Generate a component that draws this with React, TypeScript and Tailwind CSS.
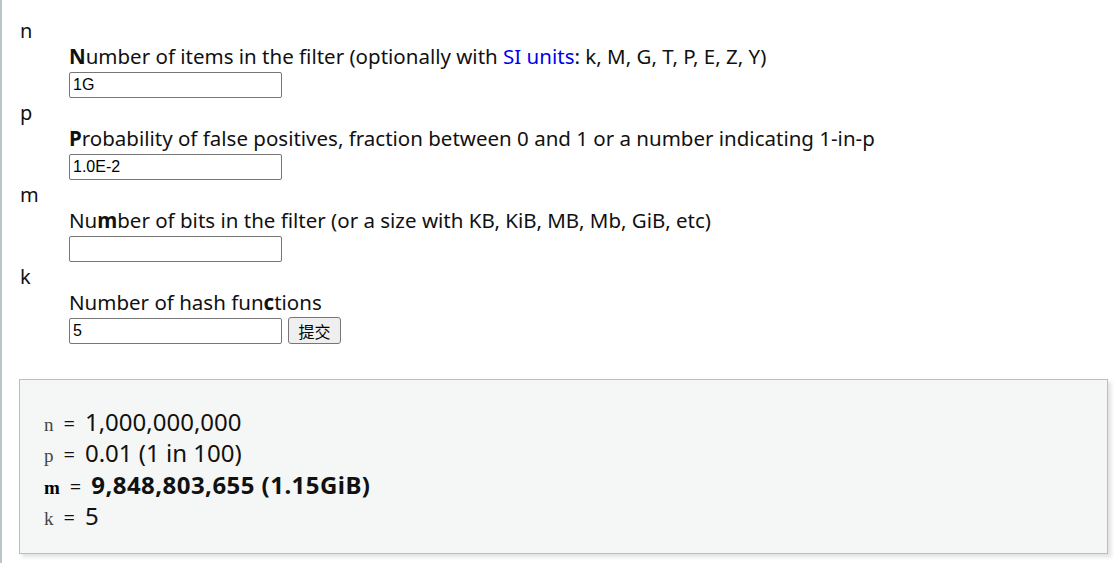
const sans = "font-['Noto_Sans','Open_Sans',sans-serif]";

function Field({
  name,
  label,
  value,
  button,
}: {
  name: string;
  label: React.ReactNode;
  value: string;
  button?: boolean;
}) {
  return (
    <div>
      <div className="h-[26px] leading-[26px] text-[20px]">{name}</div>
      <div className="ml-[49px]">
        <div className="h-[26px] leading-[24px] text-[20.5px] whitespace-nowrap">{label}</div>
        <div className="mt-[2px] mb-[2px] flex items-start gap-[6px]">
          <input
            defaultValue={value}
            className="w-[213px] h-[26px] border border-[#767676] rounded-[2px] px-[3px] text-[16px] font-['Liberation_Sans',Arial,sans-serif] text-black bg-white outline-none"
          />
          {button && (
            <button className="-mt-[1px] h-[27px] w-[53px] border border-[#767676] rounded-[3px] bg-[#efefef] text-[16px] leading-none text-black font-['Noto_Sans_CJK_SC',sans-serif]">
              提交
            </button>
          )}
        </div>
      </div>
    </div>
  );
}

function Line({ v, children, bold }: { v: string; children: React.ReactNode; bold?: boolean }) {
  return (
    <div className="h-[31.3px] leading-[31.3px] flex items-baseline whitespace-nowrap">
      <span
        className={`font-['Liberation_Serif','Times_New_Roman',serif] text-[19px] ${
          bold ? "font-bold text-black" : "text-[#444]"
        }`}
      >
        {v}
      </span>
      <span className="text-[20px] ml-[10px] mr-[10px]">=</span>
      <span className={`text-[24px] ${bold ? "font-bold tracking-[0.45px]" : ""}`}>{children}</span>
    </div>
  );
}

export default function App() {
  return (
    <div className={`min-h-[563px] border-l-2 border-[#b9c6ca] bg-white text-[#111] ${sans}`}>
      <div className="pt-[18px] pl-[18px]">
        <Field
          name="n"
          value="1G"
          label={
            <>
              <b>N</b>umber of items in the filter (optionally with{" "}
              <a className="text-[#0000ee]">SI units</a>: k, M, G, T, P, E, Z, Y)
            </>
          }
        />
        <Field
          name="p"
          value="1.0E-2"
          label={
            <>
              <b>P</b>robability of false positives, fraction between 0 and 1 or a number indicating 1-in-p
            </>
          }
        />
        <Field
          name="m"
          value=""
          label={
            <>
              Nu<b>m</b>ber of bits in the filter (or a size with KB, KiB, MB, Mb, GiB, etc)
            </>
          }
        />
        <Field
          name="k"
          value="5"
          button
          label={
            <>
              Number of hash fun<b>c</b>tions
            </>
          }
        />
      </div>
      <div className="ml-[17px] mr-[10px] mt-[35px] border border-[#b3c0c4] bg-[#f5f7f7] shadow-[3px_3px_4px_rgba(0,0,0,0.12)] pt-[26px] pb-[22px] pl-[24px]">
        <Line v="n">1,000,000,000</Line>
        <Line v="p">0.01 (1 in 100)</Line>
        <Line v="m" bold>
          9,848,803,655 (1.15GiB)
        </Line>
        <Line v="k">5</Line>
      </div>
    </div>
  );
}
